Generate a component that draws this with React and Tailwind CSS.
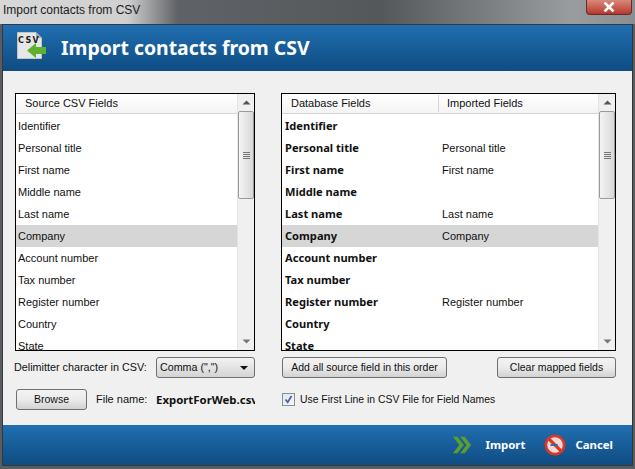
import React from 'react';

const sourceFields = ['Identifier', 'Personal title', 'First name', 'Middle name', 'Last name', 'Company', 'Account number', 'Tax number', 'Register number', 'Country', 'State'];
const mapped = {
  'Personal title': 'Personal title',
  'First name': 'First name',
  'Last name': 'Last name',
  Company: 'Company',
  'Register number': 'Register number',
};

function ScrollBar() {
  return (
    <div className="w-[17px] shrink-0 bg-[#f0f0f0] flex flex-col items-center border-l border-[#e4e4e4]">
      <div className="h-[17px] w-full flex items-center justify-center">
        <svg width="9" height="5" viewBox="0 0 9 5"><path d="M4.5 0.5 L8.5 4.5 H0.5 Z" fill="#555" /></svg>
      </div>
      <div className="w-full h-[88px] rounded-[2px] border border-[#9a9a9a] bg-gradient-to-r from-[#f4f4f4] to-[#d8d8d8] flex flex-col items-center justify-center gap-[1px]">
        <div className="w-[7px] h-px bg-[#777]" />
        <div className="w-[7px] h-px bg-[#777]" />
        <div className="w-[7px] h-px bg-[#777]" />
        <div className="w-[7px] h-px bg-[#777]" />
      </div>
      <div className="flex-1" />
      <div className="h-[17px] w-full flex items-center justify-center">
        <svg width="9" height="5" viewBox="0 0 9 5"><path d="M4.5 4.5 L8.5 0.5 H0.5 Z" fill="#777" /></svg>
      </div>
    </div>
  );
}

function Btn({ children, className }) {
  return (
    <button className={`h-[21px] rounded-[3px] border border-[#707070] bg-gradient-to-b from-[#f3f3f3] via-[#ebebeb] to-[#d2d2d2] text-[#111] text-[10.5px] leading-none whitespace-nowrap ${className}`}>
      {children}
    </button>
  );
}

function CsvIcon() {
  return (
    <svg width="32" height="32" viewBox="0 0 32 32">
      <path d="M1.5 0.5 H20 L25.5 6 V26.5 H1.5 Z" fill="#e6e6e6" stroke="#c4c4c4" />
      <path d="M20 0.5 V6 H25.5 Z" fill="#a9a9a9" />
      <text x="2" y="11" fontSize="8" fontWeight="700" letterSpacing="1.4" fontFamily="'DejaVu Sans', sans-serif" fill="#222">CSV</text>
      <path d="M11 18.5 L20 11 V15 H30 V22 H20 V26 Z" fill="#5fb02e" />
    </svg>
  );
}

export default function App() {
  return (
    <div className="w-[635px] h-[469px] flex flex-col overflow-hidden bg-[#5a5d60] font-['Liberation_Sans','Noto_Sans',sans-serif] text-[11px] text-[#111]">
      {/* title bar */}
      <div className="h-[24px] shrink-0 flex items-start justify-between bg-[linear-gradient(90deg,#d8d8d8_0%,#d0d0d0_20%,#5f6266_28%,#55585b_60%,#9a9da0_90%,#8b8e91_100%)]">
        <span className="ml-[3px] mt-[2px] text-[12px] leading-[16px] text-[#1a1a1a]">Import contacts from CSV</span>
        <div className="mr-[3px] w-[46px] h-[15px] rounded-b-[4px] border border-t-0 border-[#6b2a22] bg-gradient-to-b from-[#d8887c] to-[#b5362a] flex items-center justify-center">
          <svg width="12" height="10" viewBox="0 0 12 10"><path d="M1.5 0.5 L10.5 9.5 M10.5 0.5 L1.5 9.5" stroke="#fff" strokeWidth="2.6" /></svg>
        </div>
      </div>

      {/* window */}
      <div className="flex-1 flex flex-col mx-[2px] mb-[3px] border border-[#33383d]">
        <div className="h-[46px] shrink-0 flex items-center pl-[13px] bg-gradient-to-b from-[#206fb1] to-[#0f4c82]">
          <CsvIcon />
          <h1 className="ml-[13px] text-white text-[19.4px] font-bold leading-none font-['Noto_Sans',sans-serif]">Import contacts from CSV</h1>
        </div>

        <div className="flex-1 bg-[#f0f0f0] pl-[12px] pr-[16px] pt-[22px]">
          <div className="flex gap-[26px]">
            {/* left list */}
            <div className="w-[240px] h-[258px] border border-black bg-white flex overflow-hidden">
              <div className="flex-1 min-w-0 flex flex-col">
                <div className="h-[20px] shrink-0 pl-[9px] flex items-center border-b border-[#d5d5d5] bg-gradient-to-b from-white to-[#f4f4f4]">Source CSV Fields</div>
                <div className="pt-[1px]">
                  {sourceFields.map((f) => (
                    <div key={f} className={`h-[22px] pl-[2px] flex items-center ${f === 'Company' ? 'bg-[#d6d6d6]' : ''}`}>{f}</div>
                  ))}
                </div>
              </div>
              <ScrollBar />
            </div>

            {/* right list */}
            <div className="w-[335px] h-[258px] border border-black bg-white flex overflow-hidden">
              <div className="flex-1 min-w-0 flex flex-col">
                <div className="h-[20px] shrink-0 flex items-center border-b border-[#d5d5d5] bg-gradient-to-b from-white to-[#f4f4f4]">
                  <div className="w-[157px] pl-[9px] border-r border-[#d5d5d5]">Database Fields</div>
                  <div className="pl-[8px]">Imported Fields</div>
                </div>
                <div className="pt-[1px]">
                  {sourceFields.map((f) => (
                    <div key={f} className={`h-[22px] flex items-center ${f === 'Company' ? 'bg-[#d6d6d6]' : ''}`}>
                      <div className="w-[160px] pl-[3px] font-bold text-[11.1px] font-['Noto_Sans',sans-serif]">{f}</div>
                      <div>{mapped[f]}</div>
                    </div>
                  ))}
                </div>
              </div>
              <ScrollBar />
            </div>
          </div>

          {/* controls */}
          <div className="flex gap-[26px] mt-[6px]">
            <div className="w-[240px] flex flex-col gap-[11px]">
              <div className="flex items-center justify-between h-[21px]">
                <span className="ml-[-1px] whitespace-nowrap text-[10.8px]">Delimitter character in CSV:</span>
                <div className="w-[99px] h-[21px] rounded-[3px] border border-[#707070] bg-gradient-to-b from-[#f3f3f3] to-[#d4d4d4] flex items-center justify-between pl-[3px] pr-[6px]">
                  <span className="whitespace-nowrap text-[10.7px]">Comma (",")</span>
                  <svg width="8" height="4" viewBox="0 0 8 4"><path d="M0 0 H8 L4 4 Z" fill="#111" /></svg>
                </div>
              </div>
              <div className="flex items-center">
                <Btn className="w-[71px] ml-px shrink-0">Browse</Btn>
                <span className="ml-[9px] w-[60px] shrink-0 whitespace-nowrap">File name:</span>
                <span className="w-[99px] overflow-hidden whitespace-nowrap font-bold text-[11.4px] font-['Noto_Sans',sans-serif]">ExportForWeb.csv</span>
              </div>
            </div>

            <div className="w-[335px] flex flex-col gap-[11px]">
              <div className="flex items-center justify-between">
                <Btn className="w-[165px] ml-px">Add all source field in this order</Btn>
                <Btn className="w-[119px]">Clear mapped fields</Btn>
              </div>
              <div className="flex items-center h-[21px] pl-[1px]">
                <div className="w-[13px] h-[13px] border border-[#8e8f8f] bg-gradient-to-br from-[#dfe6f3] to-[#f4f6fb] flex items-center justify-center">
                  <svg width="9" height="9" viewBox="0 0 9 9"><path d="M1.5 4.5 L3.7 7.2 L7.5 1" fill="none" stroke="#4a5f97" strokeWidth="1.7" /></svg>
                </div>
                <span className="ml-[5px] whitespace-nowrap text-[10.4px]">Use First Line in CSV File for Field Names</span>
              </div>
            </div>
          </div>
        </div>

        {/* footer */}
        <div className="h-[40px] shrink-0 flex items-center justify-end pr-[19px] bg-gradient-to-b from-[#206fb1] to-[#0f4c82] text-white font-bold text-[11.4px] font-['Noto_Sans',sans-serif]">
          <svg width="20" height="20" viewBox="0 0 22 20">
            <path d="M1 1 H6 L13 10 L6 19 H1 L8 10 Z M9 1 H14 L21 10 L14 19 H9 L16 10 Z" fill="#5c9e2e" />
          </svg>
          <span className="ml-[13px]">Import</span>
          <svg className="ml-[19px]" width="22" height="22" viewBox="0 0 24 24">
            <circle cx="12" cy="12" r="10" fill="#f4d8d4" stroke="#d8372b" strokeWidth="3" />
            <path d="M5 5 L19 19" stroke="#d8372b" strokeWidth="3.5" />
            <path d="M7 12 H15" stroke="#2b6aa8" strokeWidth="2" />
          </svg>
          <span className="ml-[9px]">Cancel</span>
        </div>
      </div>
    </div>
  );
}
